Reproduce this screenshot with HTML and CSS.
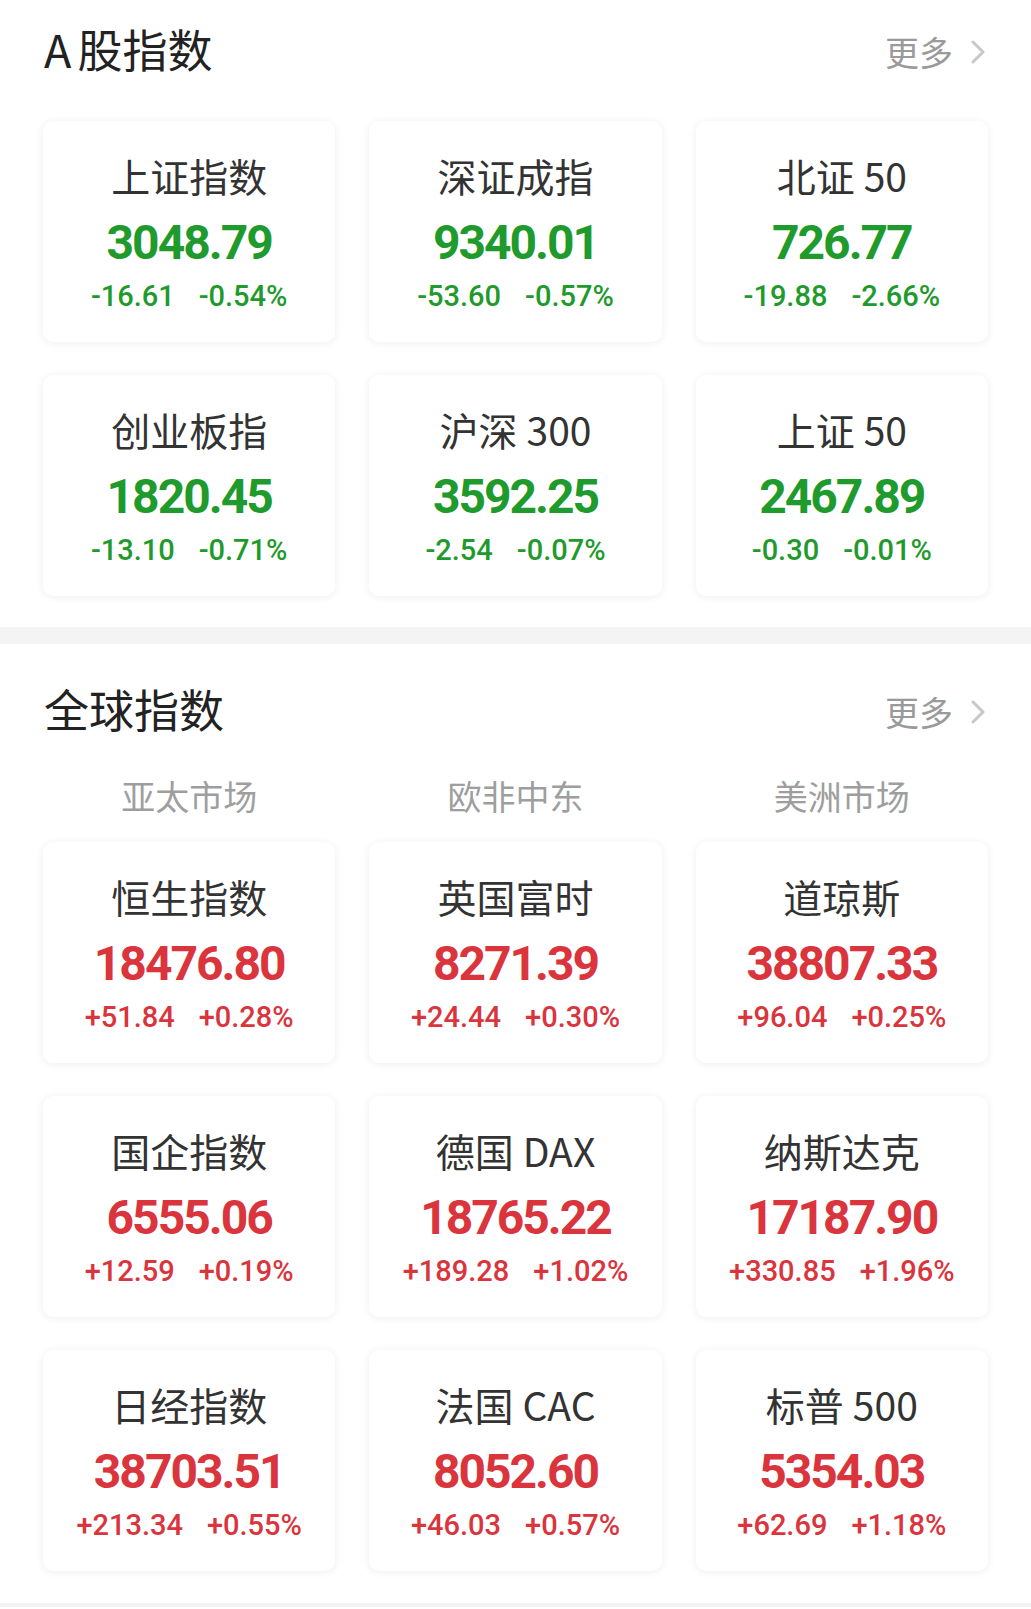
FILE: index.html
```html
<!DOCTYPE html>
<html lang="zh-CN">
<head>
<meta charset="utf-8">
<title>指数</title>
<link rel="stylesheet" href="styles.css">
</head>
<body>
<div class="page">
  <section class="section section-a">
    <div class="section-head">
      <h2 class="section-title"><span class="lat-pre">A</span>股指数</h2>
      <div class="more">更多<svg class="chev" viewBox="0 0 14 24" width="14" height="24"><path d="M2 2 L12 12 L2 22" fill="none" stroke="#c8c8c8" stroke-width="3" stroke-linecap="round" stroke-linejoin="round"/></svg></div>
    </div>
    <div class="grid">
      <div class="card down"><div class="name">上证指数</div><div class="price">3048.79</div><div class="chg"><span>-16.61</span><span>-0.54%</span></div></div>
      <div class="card down"><div class="name">深证成指</div><div class="price">9340.01</div><div class="chg"><span>-53.60</span><span>-0.57%</span></div></div>
      <div class="card down"><div class="name">北证<span class="lat">50</span></div><div class="price">726.77</div><div class="chg"><span>-19.88</span><span>-2.66%</span></div></div>
      <div class="card down"><div class="name">创业板指</div><div class="price">1820.45</div><div class="chg"><span>-13.10</span><span>-0.71%</span></div></div>
      <div class="card down"><div class="name">沪深<span class="lat">300</span></div><div class="price">3592.25</div><div class="chg"><span>-2.54</span><span>-0.07%</span></div></div>
      <div class="card down"><div class="name">上证<span class="lat">50</span></div><div class="price">2467.89</div><div class="chg"><span>-0.30</span><span>-0.01%</span></div></div>
    </div>
  </section>
  <div class="divider"></div>
  <section class="section section-g">
    <div class="section-head head-g">
      <h2 class="section-title">全球指数</h2>
      <div class="more">更多<svg class="chev" viewBox="0 0 14 24" width="14" height="24"><path d="M2 2 L12 12 L2 22" fill="none" stroke="#c8c8c8" stroke-width="3" stroke-linecap="round" stroke-linejoin="round"/></svg></div>
    </div>
    <div class="tabs">
      <div class="tab">亚太市场</div>
      <div class="tab">欧非中东</div>
      <div class="tab">美洲市场</div>
    </div>
    <div class="grid">
      <div class="card up"><div class="name">恒生指数</div><div class="price">18476.80</div><div class="chg"><span>+51.84</span><span>+0.28%</span></div></div>
      <div class="card up"><div class="name">英国富时</div><div class="price">8271.39</div><div class="chg"><span>+24.44</span><span>+0.30%</span></div></div>
      <div class="card up"><div class="name">道琼斯</div><div class="price">38807.33</div><div class="chg"><span>+96.04</span><span>+0.25%</span></div></div>
      <div class="card up"><div class="name">国企指数</div><div class="price">6555.06</div><div class="chg"><span>+12.59</span><span>+0.19%</span></div></div>
      <div class="card up"><div class="name">德国<span class="lat">DAX</span></div><div class="price">18765.22</div><div class="chg"><span>+189.28</span><span>+1.02%</span></div></div>
      <div class="card up"><div class="name">纳斯达克</div><div class="price">17187.90</div><div class="chg"><span>+330.85</span><span>+1.96%</span></div></div>
      <div class="card up"><div class="name">日经指数</div><div class="price">38703.51</div><div class="chg"><span>+213.34</span><span>+0.55%</span></div></div>
      <div class="card up"><div class="name">法国<span class="lat">CAC</span></div><div class="price">8052.60</div><div class="chg"><span>+46.03</span><span>+0.57%</span></div></div>
      <div class="card up"><div class="name">标普<span class="lat">500</span></div><div class="price">5354.03</div><div class="chg"><span>+62.69</span><span>+1.18%</span></div></div>
    </div>
  </section>
  <div class="bottom-strip"></div>
</div>
</body>
</html>
```

FILE: styles.css
```css
* { box-sizing: border-box; }
html, body { margin: 0; padding: 0; background: #ffffff; }
body {
  font-family: "Noto Sans CJK SC", "Noto Sans", sans-serif;
  color: #333;
}
.page { width: 1031px; }

.section-a { padding-bottom: 31px; }
.section-g { padding-bottom: 32px; }

.section-head {
  height: 98px;
  display: flex;
  align-items: center;
  justify-content: space-between;
  padding: 0 46px 0 44px;
}
.head-g { height: 130px; }

.section-title {
  margin: 0;
  font-size: 45px;
  font-weight: 400;
  color: #222;
  line-height: 1;
  position: relative;
  top: -1px;
}
.lat-pre { margin-right: 6px; }
.lat { margin-left: 9px; }

.more {
  display: flex;
  align-items: center;
  gap: 18px;
  font-size: 34px;
  color: #9a9a9a;
  line-height: 1;
  position: relative;
  top: 3px;
}
.chev { display: block; width: 14px; height: 24px; }

.grid {
  margin-top: 23px;
  display: grid;
  grid-template-columns: repeat(3, 1fr);
  column-gap: 34px;
  row-gap: 33px;
  padding: 0 43px;
}
.section-g .grid { margin-top: 24px; }

.card {
  height: 221px;
  background: #fff;
  border-radius: 10px;
  box-shadow: 0 1px 9px rgba(0, 0, 0, 0.07);
  display: flex;
  flex-direction: column;
  align-items: center;
  padding-top: 30px;
}

.name {
  font-size: 39px;
  line-height: 48px;
  height: 48px;
  color: #333;
  font-family: "Noto Sans CJK SC", "Noto Sans", sans-serif;
  white-space: nowrap;
}

.price {
  margin-top: 16px;
  font-family: "Roboto", "Liberation Sans", sans-serif;
  font-weight: 700;
  font-size: 48px;
  line-height: 56px;
  height: 56px;
  letter-spacing: -2px;
}

.chg {
  margin-top: 5px;
  font-family: "Roboto", "Liberation Sans", sans-serif;
  font-weight: 500;
  font-size: 29px;
  line-height: 40px;
  display: flex;
  gap: 24px;
  white-space: nowrap;
}

.down .price, .down .chg { color: #1f9a2c; }
.up .price, .up .chg { color: #da343d; }

.divider {
  height: 17px;
  background: #f4f4f4;
}

.tabs {
  display: grid;
  grid-template-columns: repeat(3, 1fr);
  column-gap: 34px;
  padding: 0 43px;
  height: 44px;
}
.tab {
  text-align: center;
  font-size: 34px;
  line-height: 44px;
  color: #9e9e9e;
}

.bottom-strip {
  height: 4px;
  background: #f3f3f3;
}
```
